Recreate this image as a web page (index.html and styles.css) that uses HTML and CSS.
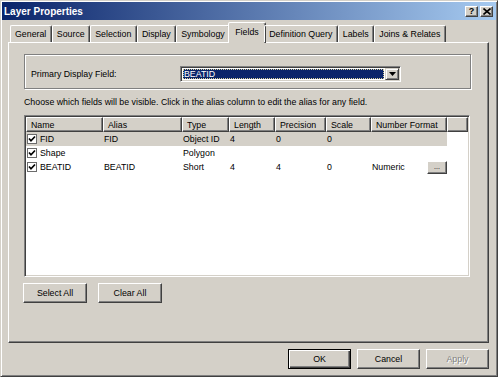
FILE: index.html
```html
<!DOCTYPE html>
<html lang="en">
<head>
    <meta charset="UTF-8">
    <title>Layer Properties</title>
    <link rel="stylesheet" href="styles.css">
</head>
<body>
    <div class="window">
        <!-- Title bar -->
        <div class="titlebar">
            <span class="title">Layer Properties</span>
            <div class="cap-btns">
                <span class="cap-btn">?</span>
                <span class="cap-btn">
                    <svg width="8" height="7" viewBox="0 0 8 7"><path d="M0.5 0.5 L7.5 6.5 M7.5 0.5 L0.5 6.5" stroke="#000" stroke-width="1.6"/></svg>
                </span>
            </div>
        </div>

        <div class="content">
            <!-- Tabs -->
            <div class="tabs">
                <div class="tab">General</div>
                <div class="tab">Source</div>
                <div class="tab">Selection</div>
                <div class="tab">Display</div>
                <div class="tab">Symbology</div>
                <div class="tab selected">Fields</div>
                <div class="tab">Definition Query</div>
                <div class="tab">Labels</div>
                <div class="tab">Joins &amp; Relates</div>
            </div>

            <div class="panel">
                <div class="group">
                    <span class="group-label">Primary Display Field:</span>
                    <div class="combo">
                        <div class="combo-value">BEATID</div>
                        <div class="combo-btn">
                            <svg width="7" height="4" viewBox="0 0 7 4"><polygon points="0,0 7,0 3.5,4" fill="#000"/></svg>
                        </div>
                    </div>
                </div>

                <p class="hint">Choose which fields will be visible. Click in the alias column to edit the alias for any field.</p>

                <!-- Fields list -->
                <div class="listview">
                    <div class="lv-head">
                        <span>Name</span>
                        <span>Alias</span>
                        <span>Type</span>
                        <span>Length</span>
                        <span>Precision</span>
                        <span>Scale</span>
                        <span>Number Format</span>
                        <span></span>
                    </div>
                    <div class="lv-row current">
                        <span class="name"><i class="check"></i>FID</span>
                        <span>FID</span>
                        <span>Object ID</span>
                        <span>4</span>
                        <span>0</span>
                        <span>0</span>
                        <span></span>
                        <span class="filler"></span>
                    </div>
                    <div class="lv-row">
                        <span class="name"><i class="check"></i>Shape</span>
                        <span></span>
                        <span>Polygon</span>
                        <span></span>
                        <span></span>
                        <span></span>
                        <span></span>
                        <span class="filler"></span>
                    </div>
                    <div class="lv-row">
                        <span class="name"><i class="check"></i>BEATID</span>
                        <span>BEATID</span>
                        <span>Short</span>
                        <span>4</span>
                        <span>4</span>
                        <span>0</span>
                        <span>Numeric <b class="dots-btn">...</b></span>
                        <span class="filler"></span>
                    </div>
                </div>

                <div class="btn-row">
                    <button type="button" class="btn">Select All</button>
                    <button type="button" class="btn">Clear All</button>
                </div>
            </div>

            <div class="footer">
                <button type="button" class="btn btn-default">OK</button>
                <button type="button" class="btn">Cancel</button>
                <button type="button" class="btn" disabled>Apply</button>
            </div>
        </div>
    </div>
</body>
</html>
```

FILE: styles.css
```css
* {
    box-sizing: border-box;
}

body {
    margin: 0;
    font-family: "Liberation Sans", Arial, sans-serif;
    font-size: 8.8px;
    color: #000;
    background: #D4D0C8;
}

.window {
    width: 498px;
    height: 377px;
    background: #D4D0C8;
    border: 1px solid;
    border-color: #D4D0C8 #404040 #404040 #D4D0C8;
    box-shadow: inset 1px 1px #fff, inset -1px -1px #808080;
    padding: 1px;
    display: flex;
    flex-direction: column;
}

/* Title bar */
.titlebar {
    height: 18px;
    display: flex;
    align-items: center;
    justify-content: space-between;
    padding: 0 3px 0 2px;
    background: linear-gradient(to right, #0A246A, #A6CAF0);
    color: #fff;
}

.title {
    font-weight: bold;
    font-size: 10px;
}

.cap-btns {
    display: flex;
    gap: 2px;
}

.cap-btn {
    width: 13px;
    height: 11px;
    background: #D4D0C8;
    border: 1px solid;
    border-color: #fff #404040 #404040 #fff;
    box-shadow: inset -1px -1px #808080;
    color: #000;
    font-size: 9px;
    font-weight: bold;
    line-height: 1;
    display: flex;
    align-items: center;
    justify-content: center;
}

.content {
    flex: 1;
    padding: 2px 7px 0 6px;
    display: flex;
    flex-direction: column;
}

/* Tabs */
.tabs {
    display: flex;
    align-items: flex-end;
    height: 20px;
    padding-left: 2px;
    position: relative;
    z-index: 1;
}

.tab {
    height: 17px;
    padding: 0 4.5px 1px 4px;
    border: 1px solid;
    border-bottom: none;
    border-color: #fff #404040 transparent #fff;
    box-shadow: inset -1px 0 #808080;
    border-radius: 2px 2px 0 0;
    display: flex;
    align-items: center;
    white-space: nowrap;
}

.tab.selected {
    height: 21px;
    margin: 0 -2px -1px;
    padding: 0 6.5px 3px 6px;
    background: #D4D0C8;
}

/* Panel */
.panel {
    height: 301px;
    border: 1px solid;
    border-color: #fff #404040 #404040 #fff;
    box-shadow: inset -1px -1px #808080;
    padding: 11px 0 0 15px;
}

.group {
    width: 447px;
    height: 35px;
    border: 1px solid #808080;
    box-shadow: inset 1px 1px #fff, 1px 1px #fff;
    display: flex;
    align-items: center;
    padding: 4px 0 0 6px;
}

.group-label {
    width: 149px;
}

.combo {
    width: 221px;
    height: 16px;
    border: 1px solid;
    border-color: #808080 #fff #fff #808080;
    box-shadow: inset 1px 1px #404040, inset -1px -1px #D4D0C8;
    background: #fff;
    display: flex;
    padding: 1px;
}

.combo-value {
    flex: 1;
    margin: 1px;
    background: #0A246A;
    color: #fff;
    padding-left: 1px;
    display: flex;
    align-items: center;
    outline: 1px dotted #d8cf9a;
    outline-offset: -1px;
}

.combo-btn {
    width: 14px;
    background: #D4D0C8;
    border: 1px solid;
    border-color: #D4D0C8 #404040 #404040 #D4D0C8;
    box-shadow: inset 1px 1px #fff, inset -1px -1px #808080;
    display: flex;
    align-items: center;
    justify-content: center;
}

.hint {
    margin: 8px 0 0;
    line-height: 11px;
    white-space: nowrap;
}

/* List view */
.listview {
    margin-top: 7px;
    width: 446px;
    height: 162px;
    background: #fff;
    border: 1px solid;
    border-color: #808080 #fff #fff #808080;
    box-shadow: inset 1px 1px #404040, inset -1px -1px #D4D0C8;
    padding: 1px;
}

.lv-head,
.lv-row {
    display: grid;
    grid-template-columns: 77px 79px 47px 46px 51px 45px 76px 1fr;
}

.lv-head {
    height: 15px;
}

.lv-head span {
    background: #D4D0C8;
    border: 1px solid;
    border-color: #fff #404040 #404040 #fff;
    box-shadow: inset -1px -1px #808080;
    padding-left: 4px;
    display: flex;
    align-items: center;
    white-space: nowrap;
    overflow: hidden;
}

.lv-row {
    height: 14px;
}

.lv-row span {
    display: flex;
    align-items: center;
    padding-left: 1px;
    white-space: nowrap;
}

.lv-row.current span {
    background: #D4D0C8;
}

.lv-row.current span.filler {
    background: #fff;
}

.check {
    width: 10px;
    height: 10px;
    margin-right: 3px;
    border: 1px solid #6b6b6b;
    background: #fff url("data:image/svg+xml,%3Csvg xmlns='http://www.w3.org/2000/svg' width='8' height='8'%3E%3Cpolyline points='1,3.5 3,5.8 7,1.5' fill='none' stroke='%23000' stroke-width='1.7'/%3E%3C/svg%3E") no-repeat center;
}

.dots-btn {
    width: 20px;
    height: 13px;
    margin-left: auto;
    background: #D4D0C8;
    border: 1px solid;
    border-color: #fff #404040 #404040 #fff;
    box-shadow: inset -1px -1px #808080;
    font-weight: normal;
    font-size: 7px;
    display: flex;
    align-items: center;
    justify-content: center;
    padding-bottom: 1px;
}

/* Buttons */
.btn-row {
    display: flex;
    gap: 11px;
    margin: 6px 0 0 -1px;
}

.btn {
    width: 64px;
    height: 20px;
    padding: 0;
    background: #D4D0C8;
    border: 1px solid;
    border-color: #fff #404040 #404040 #fff;
    box-shadow: inset -1px -1px #808080;
    font: inherit;
    color: #000;
}

.footer {
    display: flex;
    justify-content: flex-end;
    gap: 6px;
    margin-top: 6px;
}

.footer .btn {
    width: 63px;
}

.btn-default {
    border-color: #000;
    box-shadow: inset 1px 1px #fff, inset -1px -1px #404040, inset -2px -2px #808080;
}

.btn:disabled {
    color: #808080;
    text-shadow: 1px 1px #fff;
}
```
